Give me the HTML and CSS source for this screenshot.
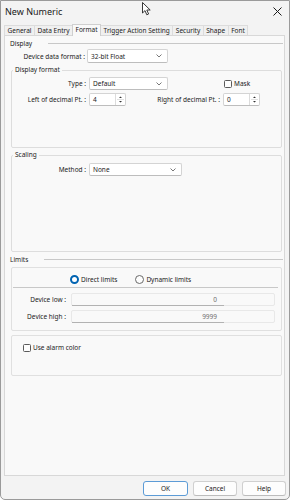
FILE: index.html
```html
<!DOCTYPE html>
<html>
<head>
<meta charset="utf-8">
<link rel="stylesheet" href="styles.css">
</head>
<body>
<div class="window">
  <div class="titlebar">
    <span class="title">New Numeric</span>
    <svg class="close" width="9" height="9" viewBox="0 0 9 9"><path d="M0.5 0.5 L8.5 8.5 M8.5 0.5 L0.5 8.5" stroke="#1a1a1a" stroke-width="1"/></svg>
  </div>
  <svg class="cursor" width="10" height="14" viewBox="0 0 10 14"><path d="M0.5 0.5 L0.5 11 L3 8.6 L4.8 12.8 L6.6 12 L4.8 8 L8.2 8 Z" fill="#fff" stroke="#222" stroke-width="0.9" stroke-linejoin="round"/></svg>
  <div class="tabs">
    <span class="tab">General</span>
    <span class="tab">Data Entry</span>
    <span class="tab active">Format</span>
    <span class="tab">Trigger Action Setting</span>
    <span class="tab">Security</span>
    <span class="tab">Shape</span>
    <span class="tab">Font</span>
  </div>
  <div class="panel">
    <div class="sechead"><span>Display</span><i class="rule"></i></div>
    <div class="row r-ddf">
      <span class="lbl l-ddf">Device data format :</span>
      <div class="select s-ddf"><span>32-bit Float</span><svg class="chev" width="6" height="4" viewBox="0 0 6 4"><path d="M0.5 0.5 L3 3 L5.5 0.5" fill="none" stroke="#555" stroke-width="0.8"/></svg></div>
    </div>
    <fieldset class="group g-df">
      <legend>Display format</legend>
      <div class="row r-type">
        <span class="lbl l-in">Type :</span>
        <div class="select s-type"><span>Default</span><svg class="chev" width="6" height="4" viewBox="0 0 6 4"><path d="M0.5 0.5 L3 3 L5.5 0.5" fill="none" stroke="#555" stroke-width="0.8"/></svg></div>
        <span class="check mask"><i class="box"></i><span>Mask</span></span>
      </div>
      <div class="row r-spin">
        <span class="lbl l-in">Left of decimal Pt. :</span>
        <div class="spin"><span class="spinval">4</span><span class="spinbtns"><svg width="7" height="11" viewBox="0 0 7 11"><path d="M2 4 L3.5 2.5 L5 4 Z M2 7 L3.5 8.5 L5 7 Z" fill="#333"/><path d="M0 5.5 H7" stroke="#ccc" stroke-width="0.6"/></svg></span></div>
        <span class="lbl l-right">Right of decimal Pt. :</span>
        <div class="spin"><span class="spinval">0</span><span class="spinbtns"><svg width="7" height="11" viewBox="0 0 7 11"><path d="M2 4 L3.5 2.5 L5 4 Z M2 7 L3.5 8.5 L5 7 Z" fill="#333"/><path d="M0 5.5 H7" stroke="#ccc" stroke-width="0.6"/></svg></span></div>
      </div>
    </fieldset>
    <fieldset class="group g-sc">
      <legend>Scaling</legend>
      <div class="row r-method">
        <span class="lbl l-in">Method :</span>
        <div class="select s-method"><span>None</span><svg class="chev" width="6" height="4" viewBox="0 0 6 4"><path d="M0.5 0.5 L3 3 L5.5 0.5" fill="none" stroke="#555" stroke-width="0.8"/></svg></div>
      </div>
    </fieldset>
    <div class="sechead s-limits"><span>Limits</span><i class="rule"></i></div>
    <div class="box-limits">
      <div class="radios">
        <span class="radio on"><i class="dot"></i><span>Direct limits</span></span>
        <span class="radio"><i class="dot"></i><span>Dynamic limits</span></span>
      </div>
      <div class="hline"></div>
      <div class="row r-dev">
        <span class="lbl l-dev">Device low :</span>
        <div class="dfield"><span class="dval">0</span></div>
      </div>
      <div class="row r-dev r-dev2">
        <span class="lbl l-dev">Device high :</span>
        <div class="dfield"><span class="dval">9999</span></div>
      </div>
    </div>
    <div class="box-alarm">
      <span class="check"><i class="box"></i><span>Use alarm color</span></span>
    </div>
  </div>
  <div class="footer">
    <button class="btn ok">OK</button>
    <button class="btn">Cancel</button>
    <button class="btn">Help</button>
  </div>
</div>
</body>
</html>
```

FILE: styles.css
```css
* { box-sizing: border-box; }
html, body { margin: 0; padding: 0; }
body {
  width: 290px;
  height: 500px;
  background: #ffffff;
  font-family: "Noto Sans", "Open Sans", sans-serif;
  font-size: 6.5px;
  color: #1b1b1b;
}
.window {
  position: relative;
  width: 290px;
  height: 500px;
  border: 1px solid #9a9a9a;
  border-radius: 0 0 5px 5px;
  background: #f3f3f3;
  display: flex;
  flex-direction: column;
}
.titlebar {
  height: 22px;
  display: flex;
  align-items: center;
  justify-content: space-between;
  padding: 0 7px 2px 4px;
}
.title { font-size: 9px; color: #1a1a1a; }
.close { display: block; }
.cursor { position: absolute; left: 141px; top: 1px; }
.tabs {
  display: flex;
  align-items: flex-end;
  height: 12px;
  padding-left: 3px;
  position: relative;
  z-index: 2;
}
.tab {
  height: 10px;
  line-height: 9px;
  padding: 0 2.5px;
  background: #f0f0f0;
  border: 1px solid #dcdcdc;
  border-bottom: none;
  margin-right: -1px;
  white-space: nowrap;
}
.tab.active {
  height: 12px;
  line-height: 10px;
  background: #f9f9f9;
  border-color: #cfcfcf;
  position: relative;
  z-index: 3;
  margin-bottom: -1px;
}
.panel {
  margin-left: 3px;
  width: 281px;
  height: 441px;
  border: 1px solid #d8d8d8;
  background: #f9f9f9;
  padding: 2px 1px 0 5px;
  display: flex;
  flex-direction: column;
}
.sechead {
  height: 10px;
  display: flex;
  align-items: center;
  gap: 6px;
}
.sechead .rule {
  flex: 1;
  height: 1px;
  background: #c8c8c8;
  margin-left: 10px;
}
.row { display: flex; align-items: center; }
.lbl { text-align: right; white-space: nowrap; }
.r-ddf { margin-top: 1px; height: 14px; }
.l-ddf { width: 75px; margin-right: 2px; }
.select {
  height: 14px;
  background: #ffffff;
  border: 1px solid #d4d4d4;
  border-bottom-color: #bdbdbd;
  border-radius: 2px;
  display: flex;
  align-items: center;
  justify-content: space-between;
  padding: 0 5px 0 3px;
}
.chev { display: block; }
.s-ddf { width: 81px; }
.group {
  margin: 2px 1px 0 1px;
  border: 1px solid #dddddd;
  border-radius: 2px;
  padding: 0;
  min-width: 0;
}
.group legend {
  padding: 0 2px;
  margin-left: 1px;
  height: 10px;
  line-height: 10px;
}
.g-df { padding: 2px 0 41px 0; }
.l-in { width: 74px; margin-right: 3px; }
.r-type { height: 13px; }
.s-type { width: 79px; height: 13px; }
.check { display: inline-flex; align-items: center; gap: 2px; }
.check .box {
  width: 8px;
  height: 8px;
  border: 1px solid #5a5a5a;
  border-radius: 1.5px;
  background: #fdfdfd;
}
.mask { margin-left: 56px; }
.r-spin { margin-top: 3px; height: 13px; }
.spin {
  width: 37px;
  height: 13px;
  display: flex;
  background: #ffffff;
  border: 1px solid #d4d4d4;
  border-bottom-color: #bdbdbd;
  border-radius: 2px;
}
.spinval { flex: 1; padding-left: 3px; line-height: 11px; }
.spinbtns {
  width: 10px;
  border-left: 1px solid #dcdcdc;
  display: flex;
  align-items: center;
  justify-content: center;
}
.spinbtns svg { display: block; }
.l-right { width: 94px; margin-right: 3px; }
.g-sc { padding: 3px 0 75px 0; }
.r-method { height: 13px; }
.s-method { width: 93px; height: 13px; }
.s-limits { margin-top: 2px; }
.box-limits {
  margin: 3px 1px 0 1px;
  height: 64px;
  border: 1px solid #e0e0e0;
  border-radius: 2px;
  padding-top: 6px;
}
.radios {
  height: 10px;
  display: flex;
  align-items: center;
  padding-left: 58px;
  gap: 18px;
}
.radio { display: inline-flex; align-items: center; gap: 2px; }
.radio .dot {
  width: 9px;
  height: 9px;
  border-radius: 50%;
  border: 1px solid #6a6a6a;
  background: #fdfdfd;
}
.radio.on .dot {
  border: 2.5px solid #0063b1;
  background: #ffffff;
}
.hline {
  margin: 3px 3px 0 1px;
  height: 1px;
  background: #c8c8c8;
}
.r-dev { margin-top: 5px; height: 13px; }
.r-dev2 { margin-top: 4px; }
.l-dev { width: 54px; margin-right: 5px; }
.dfield {
  width: 204px;
  height: 13px;
  border: 1px solid #e8e8e8;
  border-radius: 2px;
  background: #f9f9f9;
}
.dval {
  display: block;
  width: 152px;
  height: 12px;
  line-height: 11px;
  border-bottom: 1px solid #b2b2b2;
  text-align: right;
  padding-right: 7px;
  color: #6e6e6e;
}
.box-alarm {
  margin: 4px 1px 0 1px;
  height: 41px;
  border: 1px solid #e0e0e0;
  border-radius: 2px;
  padding: 7px 0 0 11px;
}
.footer {
  display: flex;
  justify-content: flex-end;
  gap: 5px;
  padding: 5px 3px 0 0;
}
.btn {
  width: 44px;
  height: 15px;
  padding: 0;
  font-family: inherit;
  font-size: 6.5px;
  color: #1b1b1b;
  background: #fdfdfd;
  border: 1px solid #d0d0d0;
  border-bottom-color: #bcbcbc;
  border-radius: 3px;
}
.btn.ok { width: 45px; border: 1px solid #5c9bd6; }
```
